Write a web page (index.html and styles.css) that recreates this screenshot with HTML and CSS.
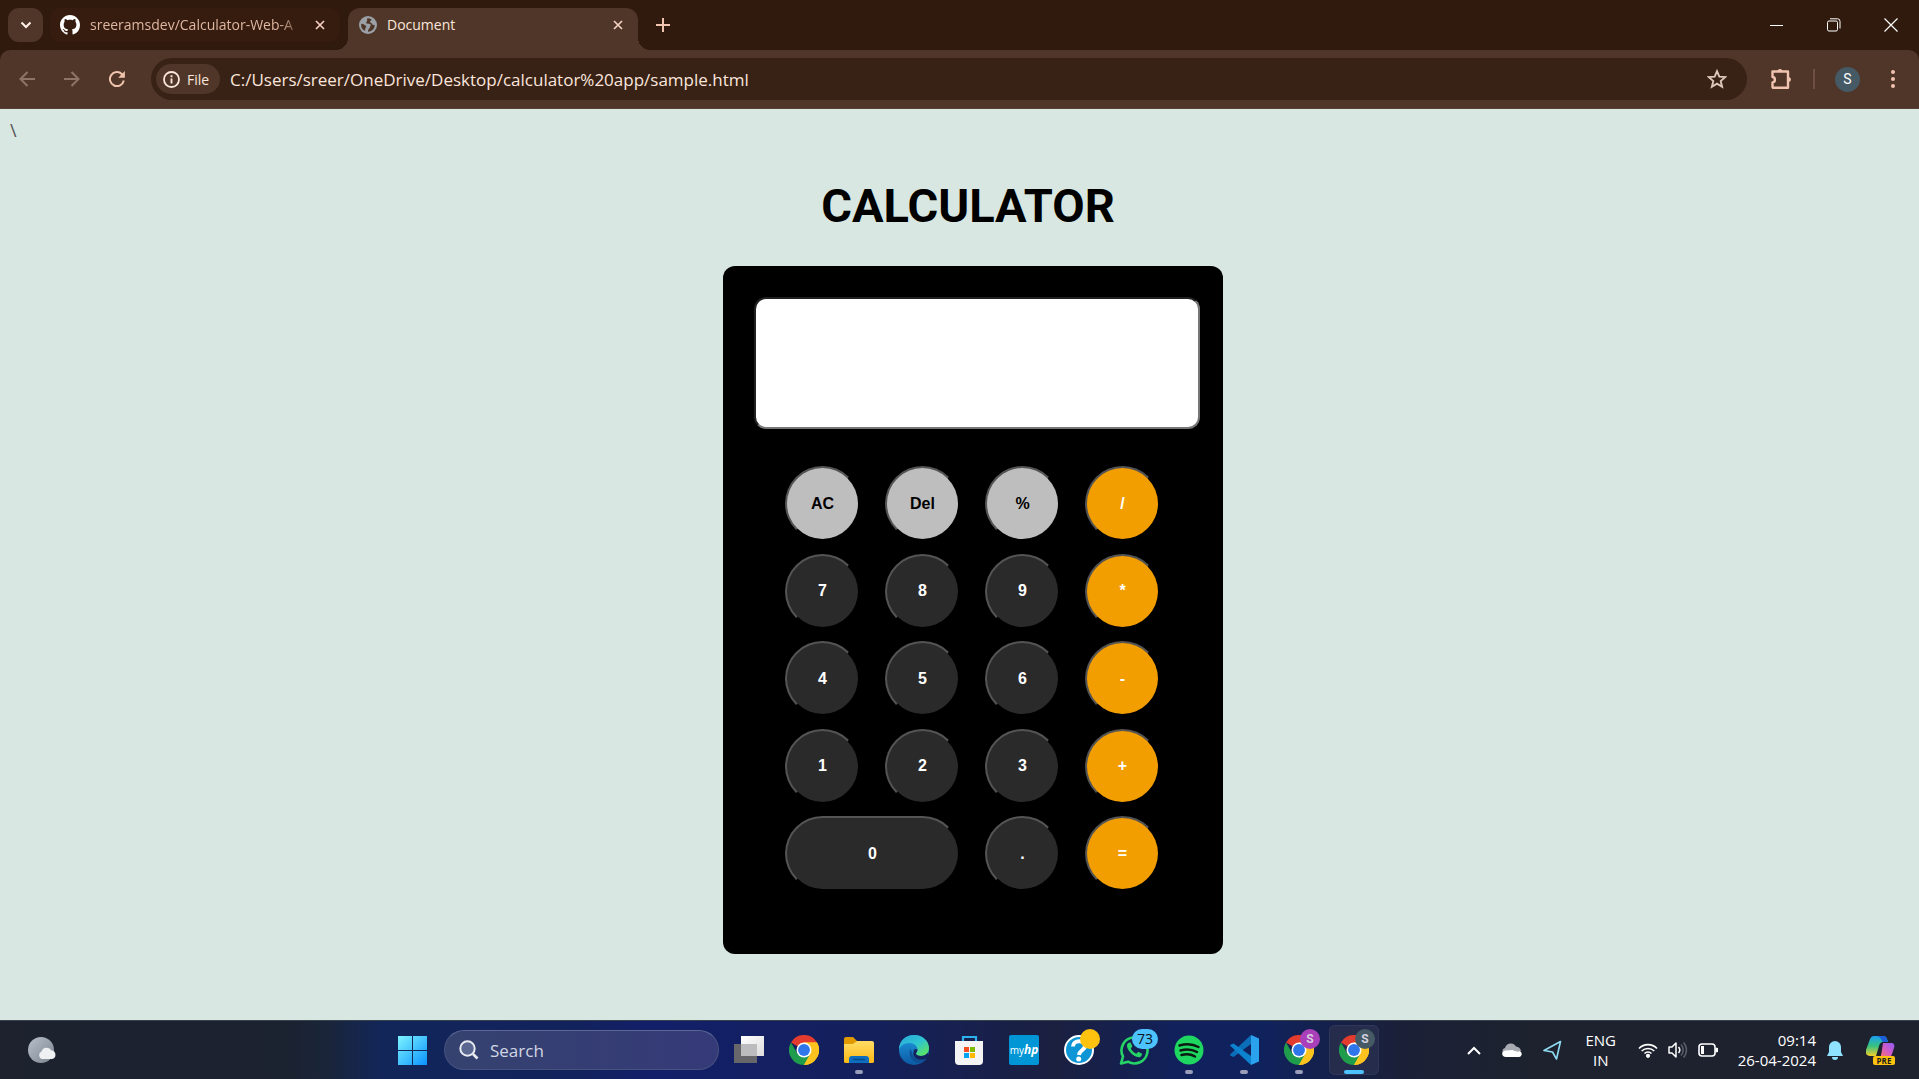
FILE: index.html
```html
<!DOCTYPE html>
<html lang="en">
<head>
<meta charset="utf-8">
<title>Document</title>
<link rel="stylesheet" href="styles.css">
</head>
<body>
<svg class="defs" aria-hidden="true">
  <defs>
    <linearGradient id="win" x1="0" y1="0" x2="1" y2="1"><stop offset="0" stop-color="#7df3ff"/><stop offset="1" stop-color="#0a93ff"/></linearGradient>
    <linearGradient id="folder" x1="0" y1="0" x2="0" y2="1"><stop offset="0" stop-color="#ffdc66"/><stop offset="1" stop-color="#fdb813"/></linearGradient>
    <linearGradient id="edgeTop" x1="0" y1="0" x2="1" y2="1"><stop offset="0" stop-color="#2aa6dc"/><stop offset=".5" stop-color="#2fc4d2"/><stop offset="1" stop-color="#66eb47"/></linearGradient>
    <linearGradient id="edgeBody" x1="0" y1="0" x2="0" y2="1"><stop offset="0" stop-color="#1f9be0"/><stop offset="1" stop-color="#0c59a4"/></linearGradient>
    <linearGradient id="copL" x1="0" y1="0" x2="0" y2="1"><stop offset="0" stop-color="#1ba1f2"/><stop offset=".5" stop-color="#36c27f"/><stop offset="1" stop-color="#f4d02c"/></linearGradient>
    <linearGradient id="copR" x1="1" y1="0" x2="0" y2="1"><stop offset="0" stop-color="#8e5cf5"/><stop offset=".5" stop-color="#d65bc4"/><stop offset="1" stop-color="#ff7a55"/></linearGradient>
    <linearGradient id="moon" x1="0" y1="0" x2="1" y2="1"><stop offset="0" stop-color="#b8c0ca"/><stop offset="1" stop-color="#7c8590"/></linearGradient>
    <linearGradient id="pane" x1="0" y1="0" x2="1" y2="1"><stop offset="0" stop-color="#ffffff"/><stop offset="1" stop-color="#dcdcdc"/></linearGradient>
    <symbol id="chrome" viewBox="0 0 48 48">
      <path fill="#e33b2e" d="M24 24 3.2 12A24 24 0 0 1 44.8 12Z"/>
      <path fill="#fcc31e" d="M24 24V12H44.8A24 24 0 0 1 24 48Z"/>
      <path fill="#1f9d4d" d="M3.2 12 13.6 30 24 36 34.4 30 24 48A24 24 0 0 1 3.2 12Z"/>
      <path fill="#fcc31e" d="M34.4 30 24 48A24 24 0 0 0 44.8 12H24Z"/>
      <circle cx="24" cy="24" r="12" fill="#fff"/><circle cx="24" cy="24" r="9.5" fill="#2f76ea"/>
    </symbol>
    <symbol id="close" viewBox="0 0 10 10"><path d="M1 1 9 9M9 1 1 9" stroke="currentColor" stroke-width="1.7" fill="none"/></symbol>
  </defs>
</svg>

<header class="browser">
  <div class="tabstrip">
    <button class="tab-search" aria-label="Search tabs"><svg width="12" height="8" viewBox="0 0 12 8"><path d="M1.500 1.500 6 6l4.500-4.500" fill="none" stroke="currentColor" stroke-width="2"/></svg></button>
    <div class="tab">
      <svg width="20" height="20" viewBox="0 0 16 16"><path fill="#fff" d="M8 0C3.580 0 0 3.580 0 8c0 3.540 2.290 6.530 5.470 7.590.4.070.55-.17.55-.38 0-.19-.01-.82-.01-1.490-2.010.37-2.530-.49-2.690-.94-.09-.23-.48-.94-.82-1.130-.28-.15-.68-.52-.01-.53.63-.01 1.080.58 1.230.82.72 1.210 1.870.87 2.330.66.070-.52.28-.87.51-1.070-1.780-.2-3.640-.89-3.640-3.950 0-.87.31-1.590.82-2.150-.08-.2-.36-1.020.08-2.120 0 0 .67-.21 2.200.82.64-.18 1.320-.27 2-.27s1.360.09 2 .27c1.530-1.040 2.200-.82 2.200-.82.44 1.100.16 1.920.08 2.120.51.56.82 1.270.82 2.150 0 3.070-1.870 3.750-3.650 3.950.29.25.54.73.54 1.480 0 1.070-.01 1.930-.01 2.200 0 .21.15.46.55.38A8.010 8.010 0 0 0 16 8c0-4.420-3.580-8-8-8Z"/></svg>
      <span class="tab-title faded">sreeramsdev/Calculator-Web-A</span>
      <button class="tab-close" aria-label="Close tab"><svg width="10" height="10"><use href="#close"/></svg></button>
    </div>
    <div class="tab active">
      <svg width="18" height="18" viewBox="0 0 18 18"><circle cx="9" cy="9" r="9" fill="#9aa0a6"/><path d="M8.500 2.200C7.300 3.500 9 4.500 7.600 5.800 6.400 6.900 7.500 8 9.500 7.800c2.200-.2 2.700 1.200 1.900 2.300-.8 1-.2 1.900-1.600 3-.9.8-.8 2-.8 2.700A6.900 6.900 0 0 0 15.800 9c-1.300.3-2.400-.2-2.900-1.300-.5-1-1.800-.7-1.900-1.900-.1-1.200 1.500-1 1.600-2.400A7 7 0 0 0 8.500 2.200ZM2.200 7.800c2.400.2 4.500 1.200 5 2.800.3 1.200-1.300 1.400-1 2.700.2.900-.4 1.300-.9 1.400A7 7 0 0 1 2.200 7.800Z" fill="#503629"/></svg>
      <span class="tab-title">Document</span>
      <button class="tab-close" aria-label="Close tab"><svg width="10" height="10"><use href="#close"/></svg></button>
    </div>
    <button class="new-tab" aria-label="New tab"><svg width="14" height="14" viewBox="0 0 14 14"><path d="M7 0v14M0 7h14" stroke="currentColor" stroke-width="2"/></svg></button>
    <div class="window-controls">
      <button aria-label="Minimize"><svg width="14" height="14" viewBox="0 0 14 14"><path d="M0 7.500h13" stroke="#fff"/></svg></button>
      <button aria-label="Restore"><svg width="14" height="14" viewBox="0 0 14 14" fill="none" stroke="#fff"><rect x=".5" y="3" width="10" height="10" rx="1.500"/><path d="M3 .8h7.500a2.500 2.500 0 0 1 2.500 2.500V10.500"/></svg></button>
      <button aria-label="Close"><svg width="14" height="14" viewBox="0 0 14 14"><path d="M.5.5l13 13M13.500.5l-13 13" stroke="#fff" stroke-width="1.200"/></svg></button>
    </div>
  </div>

  <div class="toolbar">
    <button class="nav dim" aria-label="Back"><svg width="16" height="16" viewBox="0 0 16 16"><path d="M16 8H2M8.500 1 1.500 8l7 7" fill="none" stroke="currentColor" stroke-width="2"/></svg></button>
    <button class="nav dim" aria-label="Forward"><svg width="16" height="16" viewBox="0 0 16 16"><path d="M0 8h14M7.500 1l7 7-7 7" fill="none" stroke="currentColor" stroke-width="2"/></svg></button>
    <button class="nav" aria-label="Reload"><svg width="16" height="16" viewBox="0 0 16 16"><path d="M14.800 9.500A7 7 0 1 1 13 3.200L14.500 5" fill="none" stroke="currentColor" stroke-width="2"/><path d="M15.900 0v6.700H9.200Z" fill="currentColor"/></svg></button>
    <div class="omnibox">
      <button class="chip"><svg width="17" height="17" viewBox="0 0 17 17"><circle cx="8.500" cy="8.500" r="7.500" fill="none" stroke="currentColor" stroke-width="1.800"/><path d="M8.500 7.500v5M8.500 4.300v1.900" stroke="currentColor" stroke-width="1.900"/></svg>File</button>
      <input class="url" type="text" aria-label="Address" value="C:/Users/sreer/OneDrive/Desktop/calculator%20app/sample.html">
      <button class="star" aria-label="Bookmark this tab"><svg width="20" height="20" viewBox="0 0 20 20"><path d="M10 2.200 12.300 7.600l5.900.5-4.500 3.900 1.400 5.700L10 14.700l-5.100 3 1.400-5.700L1.800 8.100l5.900-.5Z" fill="none" stroke="currentColor" stroke-width="1.900"/></svg></button>
    </div>
    <div class="actions">
      <button aria-label="Extensions"><svg width="22" height="22" viewBox="0 0 22 22"><path d="M2.500 3.500H18V19.800H3.300a.8.800 0 0 1-.8-.8v-4.500c3.200-.2 3.200-5.300 0-5.500Z" fill="none" stroke="currentColor" stroke-width="2.400" stroke-linejoin="round"/><path d="M7.500 3.500a2.500 2.500 0 0 1 5 0ZM18.500 9a2.500 2.500 0 0 1 0 5Z" fill="currentColor"/></svg></button>
      <span class="divider"></span>
      <button class="avatar" aria-label="Profile">S</button>
      <button class="more" aria-label="Menu"><svg width="4" height="18" viewBox="0 0 4 18" fill="currentColor"><circle cx="2" cy="2" r="2"/><circle cx="2" cy="9" r="2"/><circle cx="2" cy="16" r="2"/></svg></button>
    </div>
  </div>
</header>

<main class="page">
  <p class="stray">\</p>
  <section class="wrapper">
    <h1>CALCULATOR</h1>
    <form class="calculator">
      <input class="display" type="text" aria-label="Result">
      <div class="keys">
        <button type="button" class="light">AC</button><button type="button" class="light">Del</button><button type="button" class="light">%</button><button type="button" class="op">/</button>
        <button type="button">7</button><button type="button">8</button><button type="button">9</button><button type="button" class="op">*</button>
        <button type="button">4</button><button type="button">5</button><button type="button">6</button><button type="button" class="op">-</button>
        <button type="button">1</button><button type="button">2</button><button type="button">3</button><button type="button" class="op">+</button>
        <button type="button" class="zero">0</button><button type="button">.</button><button type="button" class="op">=</button>
      </div>
    </form>
  </section>
</main>

<footer class="taskbar">
  <button class="weather" aria-label="Weather"><svg width="30" height="28" viewBox="0 0 30 28"><circle cx="13" cy="14" r="13" fill="url(#moon)"/><path d="M15 27a4 4 0 0 1-.5-7.500 5.500 5.500 0 0 1 10-1A4.300 4.300 0 0 1 25 27Z" transform="translate(-1 -4)" fill="#eef0f2"/></svg></button>
  <nav class="apps">
    <button class="app" aria-label="Start"><svg width="30" height="30" viewBox="0 0 30 30"><path fill="url(#win)" d="M0 1h14v14H0ZM15 1h14v14H15ZM0 16h14v14H0ZM15 16h14v14H15Z"/></svg></button>
    <label class="search"><svg width="20" height="20" viewBox="0 0 20 20"><circle cx="8.500" cy="8.500" r="7.200" fill="#5a6791" stroke="#e8eaf0" stroke-width="2"/><path d="m14 14 4.500 4.500" stroke="#e8eaf0" stroke-width="2.600"/></svg><input type="text" placeholder="Search" aria-label="Search"></label>
    <button class="app" aria-label="Task view"><svg width="30" height="30" viewBox="0 0 30 30"><path fill="#67676b" d="M0 9h23v19H0Z"/><path fill="url(#pane)" d="M7 1h23v20H7Z"/><path fill="#bcbcbe" d="M7 9h16v12H7Z"/></svg></button>
    <button class="app" aria-label="Chrome"><svg width="30" height="30"><use href="#chrome"/></svg></button>
    <button class="app open" aria-label="File Explorer"><svg width="30" height="30" viewBox="0 0 30 30"><path fill="#e09a00" d="M0 4a2 2 0 0 1 2-2h7l4 4h4v6H0Z"/><path fill="url(#folder)" d="M0 9h9l4-3h15a2 2 0 0 1 2 2v19a2 2 0 0 1-2 1H2a2 2 0 0 1-2-1Z"/><path fill="#0d6dbe" d="M5 28v-4a3 3 0 0 1 3-3h14a3 3 0 0 1 3 3v4Z"/><path d="M9 24.500h12" stroke="#064a86" stroke-width="1.500"/></svg></button>
    <button class="app" aria-label="Edge"><svg width="30" height="30" viewBox="0 0 30 30"><circle cx="15" cy="15" r="15" fill="url(#edgeBody)"/><path fill="url(#edgeTop)" d="M0 13C1 5 7 0 15 0c9 0 15 6 15 13 0 5-4 8-8 8-3 0-5-1-5-2.500 0-1 1.500-1.500 1.500-4C18.500 11 15 8 10.500 8 5 8 1 11 0 15Z"/><path fill="#0f4f94" d="M11 14c-2 8 3 14 10 14 3-1 5-3 7-5-8 3-15 0-15-6Z"/><path fill="#14215c" d="M18.500 14.500c0 2.500-1.500 3-1.500 4 0 1.500 2 2.500 5 2.500 3 0 5-1 6.500-3L30 20c-.4 1.300-1 2.300-1.700 3.200-5 2.300-10 1.300-12.300-1C13.500 20 14 16 16 14Z"/></svg></button>
    <button class="app" aria-label="Microsoft Store"><svg width="30" height="30" viewBox="0 0 30 30"><path d="M9 6V2h13v4" fill="none" stroke="#2cb0ee" stroke-width="2.200"/><path fill="#f4f4f5" d="M1 6h28v20a4 4 0 0 1-4 4H5a4 4 0 0 1-4-4Z"/><path fill="#f25022" d="M10 12h5v5h-5Z"/><path fill="#7fba00" d="M16 12h5v5h-5Z"/><path fill="#00a4ef" d="M10 18h5v5h-5Z"/><path fill="#ffb900" d="M16 18h5v5h-5Z"/></svg></button>
    <button class="app" aria-label="myHP"><span class="myhp">my<b>hp</b></span></button>
    <button class="app" aria-label="HP Support"><svg width="30" height="30" viewBox="0 0 30 30"><circle cx="15" cy="15" r="14" fill="#0d95d6" stroke="#fff" stroke-width="2"/><path d="M9 11.500C9 4.500 21 4.500 21 11c0 4-5.500 4-6 9" fill="none" stroke="#fff" stroke-width="4"/><circle cx="14.700" cy="24" r="2.500" fill="#fff"/></svg><span class="badge dot"></span></button>
    <button class="app" aria-label="WhatsApp"><svg width="30" height="30" viewBox="0 0 30 30"><path d="M2 28.500 4 21.500A13 13 0 1 1 9 26.700Z" fill="none" stroke="#25d366" stroke-width="2.600" stroke-linejoin="round"/><path fill="#25d366" d="M10 7.500c-3 1.500-2.500 5 .5 9 3.500 4.300 8 6.500 10.500 5.500 1.500-.7 2.200-2 2-3.300l-3.700-2-2 2c-2.500-1-4.500-3-5.500-5.200l1.500-2-1.500-3.800Z"/></svg><span class="badge count">73</span></button>
    <button class="app open" aria-label="Spotify"><svg width="30" height="30" viewBox="0 0 30 30"><circle cx="15" cy="15" r="14.500" fill="#1ed760"/><path d="M5.500 10.500c7-2 13.500-1.500 19 1.500M6.500 15.500c6-1.700 11.500-1.200 16.500 1.500M7.500 20c5-1.300 9.500-.9 13.500 1.500" fill="none" stroke="#0c1a12" stroke-width="2.500" stroke-linecap="round"/></svg></button>
    <button class="app open" aria-label="Visual Studio Code"><svg width="30" height="30" viewBox="0 0 30 30"><path fill="#0a6fb8" d="M1.500 19 22 0v9L4.500 22 1 20.500Z"/><path fill="#0d83cf" d="M1.500 11 22 30v-9L4.500 8.500 1 10Z"/><path fill="#2ba2ee" d="M22 0l8 3.500v23L22 30Z"/></svg></button>
    <button class="app open" aria-label="Chrome profile 1"><svg width="30" height="30"><use href="#chrome"/></svg><span class="badge person violet">S</span></button>
    <button class="app open current" aria-label="Chrome profile 2"><svg width="30" height="30"><use href="#chrome"/></svg><span class="badge person slate">S</span></button>
  </nav>
  <div class="tray">
    <button aria-label="Hidden icons"><svg width="14" height="9" viewBox="0 0 14 9"><path d="m1 8 6-6 6 6" fill="none" stroke="#fff" stroke-width="2"/></svg></button>
    <button aria-label="OneDrive"><svg width="20" height="14" viewBox="0 0 20 14"><path fill="#a7aab0" d="M3.500 12A3.600 3.600 0 0 1 3 5 6 6 0 0 1 14 3.500c3 .5 4.500 2 5 4.500Z"/><path fill="#fff" d="M4 14C-1 14-1 8 3.500 7.500l7-.5c2 1 4 2.200 7 1 3.500 1.500 2.500 6-.5 6Z"/></svg></button>
    <button aria-label="Location"><svg width="19" height="20" viewBox="0 0 19 20"><path d="M17.500 1.500 1 10.500l8.500 1.500 4 7Z" fill="none" stroke="#8fdcf3" stroke-width="1.600" stroke-linejoin="round"/></svg></button>
    <button class="lang">ENG<br>IN</button>
    <button class="status" aria-label="Network, sound, battery">
      <svg width="20" height="16" viewBox="0 0 20 16" fill="none" stroke="#fff" stroke-width="1.600"><path d="M1 6.500a12.500 12.500 0 0 1 18 0M3.700 9a9 9 0 0 1 12.600 0M6.500 11.500a5 5 0 0 1 7 0"/><circle cx="10" cy="13.800" r="1.300" fill="#fff"/></svg>
      <svg width="20" height="18" viewBox="0 0 20 18" fill="none" stroke="#fff" stroke-width="1.500"><path d="M1 6h3l4-4v14l-4-4H1Z" stroke-linejoin="round"/><path d="M10.500 6a4.500 4.500 0 0 1 0 6"/><path d="M13 3.500a8 8 0 0 1 0 11M15.500 1.500a11 11 0 0 1 0 15" stroke="#5a606b"/></svg>
      <svg width="20" height="14" viewBox="0 0 20 14"><rect x="1" y="1" width="16" height="12" rx="3" fill="none" stroke="#fff" stroke-width="1.600"/><path fill="#fff" d="M3 3h3v8H3ZM17.500 4.500 20 5v4l-2.500.5Z"/></svg>
    </button>
    <button class="clock">09:14<br>26-04-2024</button>
    <button class="bell" aria-label="Notifications"><svg width="16" height="19" viewBox="0 0 16 19"><path fill="#8fe3ff" d="M8 0a6 6 0 0 1 6 6v5l2 4H0l2-4V6a6 6 0 0 1 6-6ZM5 16h6a3 3 0 0 1-6 0Z"/></svg></button>
    <button class="copilot" aria-label="Copilot"><svg width="29" height="28" viewBox="0 0 29 28"><path fill="url(#copL)" d="M8 0h9c3 0 4 2 5 6h-5c-2 0-3 1-4 4l-3 10H4c-3 0-5-2-4-6L4 3C5 1 6 0 8 0Z"/><path fill="#1d5fd8" d="M9 0h8c3 0 4 2 5 6h-5c-2-1-1-6-8-6Z"/><path fill="url(#copR)" d="M17 7h8c3 0 4 2 3 5l-2 6c-1 3-3 4-5 4h-8c2-1 2-3 2.500-5L17 7Z"/></svg><span class="pre">PRE</span></button>
  </div>
</footer>
</body>
</html>
```
FILE: styles.css
```css
* { box-sizing: border-box; }
body {
  margin: 0;
  min-height: 100vh;
  display: flex;
  flex-direction: column;
  font-family: "Open Sans", "Segoe UI", "Noto Sans", sans-serif;
  background: #d8e7e1;
}
button { border: 0; padding: 0; background: none; color: inherit; font: inherit; }
input { border: 0; padding: 0; background: none; font: inherit; color: inherit; min-width: 0; }
svg { display: block; flex: none; }
.defs { position: absolute; width: 0; height: 0; }

/* Browser chrome */
.browser { background: #301a0e; color: #f3d3c4; }
.tabstrip { display: flex; height: 50px; padding: 8px 0 0 8px; }
.tab-search {
  width: 35px; height: 34px; border-radius: 11px; background: #503629;
  display: grid; place-items: center; margin-right: 7px; color: #fff0e8;
}
.tab {
  width: 290px; height: 34px; padding: 0 15px 0 10px; border-radius: 10px;
  display: flex; align-items: center; gap: 10px; background: #361c0e; color: #dfb7a2;
  font-size: 14px;
}
.tab-title { flex: 1; overflow: hidden; white-space: nowrap; line-height: 20px; }
.faded {
  -webkit-mask-image: linear-gradient(90deg, #000 88%, transparent);
  mask-image: linear-gradient(90deg, #000 88%, transparent);
}
.tab-close { color: #f3d0c0; }
.tab.active {
  position: relative; height: 42px; margin-left: 8px; padding: 0 15px 8px 11px;
  border-radius: 12px 12px 0 0; background: #503629; color: #fbe6dc;
}
.tab.active::before, .tab.active::after {
  content: ""; position: absolute; bottom: 0; width: 12px; height: 12px;
}
.tab.active::before { left: -12px; background: radial-gradient(circle at 0 0, transparent 12px, #503629 12px); }
.tab.active::after { right: -12px; background: radial-gradient(circle at 100% 0, transparent 12px, #503629 12px); }
.new-tab { width: 34px; height: 34px; margin-left: 8px; display: grid; place-items: center; color: #f0c4ae; }
.window-controls { margin-left: auto; display: flex; height: 34px; }
.window-controls button { width: 57px; display: grid; place-items: center; }

.toolbar {
  display: flex; align-items: center; height: 59px; padding: 0 24px 0 19px;
  background: #503629; border-bottom: 1px solid #5b4038; border-radius: 10px 10px 0 0;
}
.nav { width: 16px; margin-right: 29px; color: #f0c4ae; }
.nav.dim { color: #8e7366; }
.omnibox {
  flex: 1; height: 42px; margin-left: -3px; padding: 0 20px 0 5px; border-radius: 21px;
  display: flex; align-items: center; background: #382115;
}
.chip {
  width: 64px; height: 30px; padding-left: 7px; border-radius: 15px;
  display: flex; align-items: center; gap: 7px; background: #503629; color: #fbe6dc;
  font-size: 14px; font-weight: 500;
}
.url { flex: 1; margin-left: 10px; font-size: 17px; color: #fbe6dc; }
.star { color: #ddc6bb; }
.actions { display: flex; align-items: center; margin-left: 23px; color: #f0c4ae; }
.divider { width: 2px; height: 20px; margin: 0 20px 0 21px; background: #6e4f41; }
.avatar {
  width: 25px; height: 25px; border-radius: 50%; background: #455a64; color: #fff;
  font: 14px Roboto, sans-serif;
}
.more { margin-left: 31px; }

/* Calculator page */
.page { flex: 1; padding: 10px 8px 66px; }
.stray { margin: 0; padding-left: 2px; font: 18px/22px "Open Sans", sans-serif; color: #555; }
.wrapper { display: flex; flex-direction: column; align-items: center; padding-left: 27px; }
h1 {
  margin: 37px 10px 32px 0; text-align: center;
  font: bold 47px/56px "Franklin Gothic Medium", Roboto, sans-serif;
}
.calculator {
  width: 500px; padding: 31px 0 63px; border-radius: 12px; background: #000;
  font-family: Arial, "Liberation Sans", sans-serif;
}
.display {
  display: block; width: 446px; height: 132px; margin: 0 0 37px 31px; padding: 0 12px;
  border: 2px inset #767676; border-radius: 12px; background: #fff; color: #000; font-size: 40px;
}
.keys {
  display: grid; grid-template-columns: repeat(4, 75px); grid-auto-rows: 75px;
  column-gap: 25px; align-content: space-between; height: 425px; margin-left: 62px;
}
.keys button {
  border: 2px outset #000; border-radius: 38px; background: #2a2a2a; color: #fff;
  font-size: 16px; font-weight: bold;
}
.keys .light { background: #bebebe; color: #000; }
.keys .op { background: #f29d00; }
.keys .zero { grid-column: span 2; }

/* Taskbar */
.taskbar {
  display: grid; grid-template-columns: 1fr auto 540px; align-items: center; height: 59px;
  border-top: 1px solid #36414b; color: #fff;
  background: linear-gradient(90deg, #1d222e 0, #1b2230 15%, #1a2539 17%, #12265a 20%, #12225c 30%, #131f69 34%, #14205a 46%, #1b2040 55%, #10215e 62%, #10225c 66%, #1b2038 73%, #1d222e 80%);
}
.weather { margin-left: 28px; width: 30px; }
.apps { display: flex; align-items: center; gap: 5px; }
.app { position: relative; width: 50px; height: 50px; display: grid; place-items: center; }
.search {
  display: flex; align-items: center; gap: 11px; width: 275px; height: 40px; margin: 0 0 0 1px;
  padding: 0 14px; border: 1px solid #47527f; border-top-color: #5c6796; border-radius: 20px;
  background: linear-gradient(90deg, #35426f, #353a78);
}
.search input { width: 180px; font-size: 17px; }
.search input::placeholder { color: #d2d6e4; opacity: 1; }
.open::after {
  content: ""; position: absolute; bottom: 1px; left: 21px; width: 8px; height: 4px;
  border-radius: 2px; background: #9a9dba;
}
.current { border-radius: 6px; background: #262c4c; box-shadow: inset 0 0 0 1px #30365a; }
.current::after { left: 15px; width: 20px; background: #4cc2ff; }
.myhp {
  width: 30px; height: 30px; border-radius: 2px; background: #0096d6;
  font: 10px/30px "Open Sans", sans-serif; text-align: center;
}
.myhp b { font-style: italic; font-size: 12px; }
.badge { position: absolute; top: 4px; right: 4px; height: 20px; border-radius: 10px; }
.dot { width: 20px; background: #ffc20e; }
.count { right: 1px; width: 26px; background: #4cc2ff; color: #10131c; font-size: 14px; line-height: 20px; }
.person { width: 20px; font: bold 12px/20px Roboto, sans-serif; color: #d6cfe0; }
.violet { background: #a93fb9; }
.slate { background: #455a64; }
.tray {
  display: flex; align-items: center; justify-content: flex-end; padding-right: 24px;
  font-size: 15px; line-height: 20px;
}
.tray > button { margin-left: 21px; }
.tray .lang { margin-left: 22px; width: 34px; }
.tray .status { display: flex; align-items: center; gap: 10px; margin-left: 20px; }
.tray .clock { text-align: right; margin-left: 20px; }
.tray .bell { margin-left: 11px; }
.tray .copilot { position: relative; margin-left: 23px; }
.pre {
  position: absolute; left: 7px; bottom: -1px; width: 22px; height: 9px; border-radius: 2px;
  background: #ffc20e; color: #1c1c1c; font: bold 8px/9px "Open Sans", sans-serif;
}
```
